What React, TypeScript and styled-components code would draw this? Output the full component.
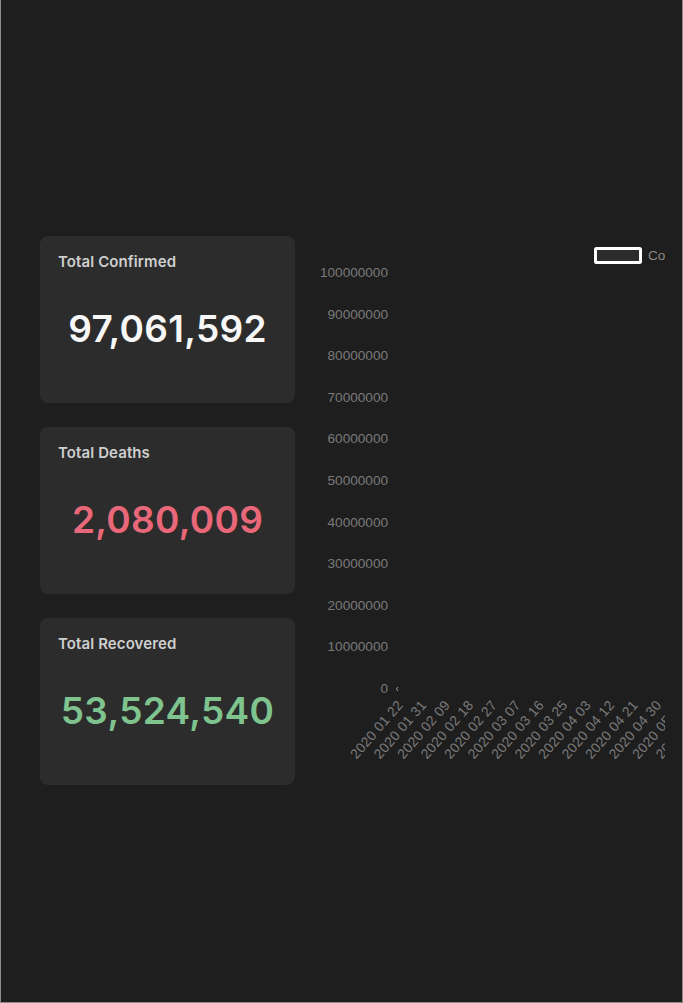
import React from "react";
import styled, { createGlobalStyle } from "styled-components";

const Global = createGlobalStyle`
  html, body { margin: 0; padding: 0; background: #1e1e1e; }
  * { box-sizing: border-box; }
`;

const Page = styled.div`
  width: 683px;
  height: 1003px;
  background: #1e1e1e;
  border-left: 1px solid #8a8a8a;
  border-right: 1px solid #8a8a8a;
  border-bottom: 1px solid #8a8a8a;
  display: flex;
  flex-direction: row;
  align-items: flex-start;
  gap: 5px;
  padding: 236px 0 0 39px;
  font-family: Inter, "Noto Sans", sans-serif;
`;

const Column = styled.div`
  display: flex;
  flex-direction: column;
  gap: 24px;
  width: 255px;
`;

const Card = styled.div`
  height: 167px;
  background: #2c2c2c;
  border-radius: 8px;
  padding: 17px 18px 0 18px;
  display: flex;
  flex-direction: column;
`;

const Title = styled.div`
  font-size: 15px;
  font-weight: 600;
  color: #cfcfcf;
  line-height: 18px;
  letter-spacing: 0.1px;
`;

const Value = styled.div<{ $color: string }>`
  flex: 1;
  display: flex;
  align-items: center;
  justify-content: center;
  padding-bottom: 18px;
  font-size: 37px;
  font-weight: 600;
  color: ${(p) => p.$color};
  letter-spacing: 0.3px;
`;

const ChartBox = styled.div`
  width: 365px;
  height: 550px;
  overflow: hidden;
`;

const yTicks = [
  "100000000",
  "90000000",
  "80000000",
  "70000000",
  "60000000",
  "50000000",
  "40000000",
  "30000000",
  "20000000",
  "10000000",
  "0",
];

const xLabels = [
  "2020 01 22",
  "2020 01 31",
  "2020 02 09",
  "2020 02 18",
  "2020 02 27",
  "2020 03 07",
  "2020 03 16",
  "2020 03 25",
  "2020 04 03",
  "2020 04 12",
  "2020 04 21",
  "2020 04 30",
  "2020 05 09",
  "2020 05 18",
];

const Chart: React.FC = () => (
  <ChartBox>
    <svg width={365} height={550} viewBox="0 0 365 550" fontFamily="'Liberation Sans', Arial, sans-serif">
      <rect x={295.5} y={12.5} width={45} height={14} fill="#2c2c2c" stroke="#ffffff" strokeWidth={3} rx={1} />
      <text x={348} y={24} fontSize={13.6} fill="#8a8a8a">Confirmed</text>
      {yTicks.map((t, i) => (
        <text key={t} x={88} y={37.5 + i * 41.6} fontSize={13.6} fill="#7a7a7a" textAnchor="end" dominantBaseline="middle">
          {t}
        </text>
      ))}
      <path d="M98 451 L96.5 453 L98 455" stroke="#9a9a9a" strokeWidth={1} fill="none" />
      {xLabels.map((l, i) => {
        const x = 101 + i * 23.5;
        const y = 467;
        return (
          <text
            key={l}
            transform={`translate(${x} ${y}) rotate(-49)`}
            fontSize={13.8}
            fill="#7a7a7a"
            textAnchor="end"
            dominantBaseline="middle"
            letterSpacing={0.3}
          >
            {l}
          </text>
        );
      })}
    </svg>
  </ChartBox>
);

export default function App() {
  return (
    <>
      <Global />
      <Page>
        <Column>
          <Card>
            <Title>Total Confirmed</Title>
            <Value $color="#f7f7f7">97,061,592</Value>
          </Card>
          <Card>
            <Title>Total Deaths</Title>
            <Value $color="#e8687a">2,080,009</Value>
          </Card>
          <Card>
            <Title>Total Recovered</Title>
            <Value $color="#7fc38e">53,524,540</Value>
          </Card>
        </Column>
        <Chart />
      </Page>
    </>
  );
}
